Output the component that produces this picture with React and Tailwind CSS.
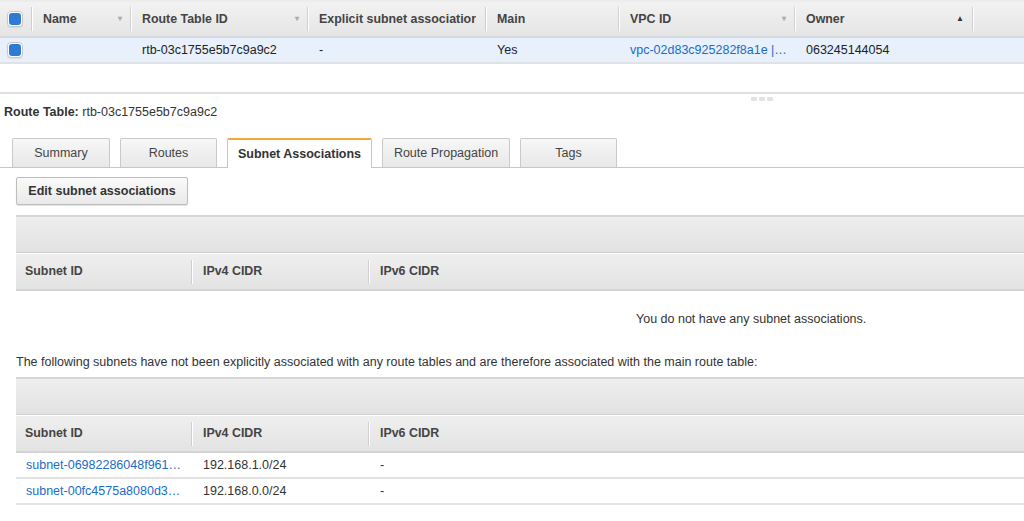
import React from "react";

const font = { fontFamily: '"Liberation Sans", Arial, Helvetica, sans-serif' };

function Checkbox() {
  return (
    <div className="w-[16px] h-[16px] rounded-[4px] border border-[#c9c9c9] bg-white flex items-center justify-center shadow-[0_1px_1px_rgba(0,0,0,0.08)]">
      <div className="w-[12px] h-[12px] rounded-[3px] bg-[#2f7ad3]" />
    </div>
  );
}

function Sep() {
  return <div className="w-[2px] h-[24px] border-l border-[#cfcfcf] bg-white" />;
}

function Arrow({ up }) {
  return (
    <span className={up ? "text-[#333] text-[8px] leading-none" : "text-[#aaa] text-[8px] leading-none"}>
      {up ? "▲" : "▾"}
    </span>
  );
}

function HeadCell({ w, label, arrow, up }) {
  return (
    <div className={`${w} h-full flex items-center`}>
      <div className="flex-1 flex items-center justify-between pl-[10px] pr-[8px] font-bold text-[#444] text-[12.4px] whitespace-nowrap overflow-hidden">
        <span className="overflow-hidden">{label}</span>
        {arrow && <Arrow up={up} />}
      </div>
      <Sep />
    </div>
  );
}

function Tab({ label, active, w }) {
  if (active) {
    return (
      <div className={`${w} h-[30px] bg-white border border-[#c6c6c6] border-t-[2px] border-t-[#f7a538] border-b-0 rounded-t-[2px] flex items-center justify-center font-bold text-[12.5px] text-[#333] -mb-px relative z-10`}>
        {label}
      </div>
    );
  }
  return (
    <div className={`${w} h-[29px] bg-gradient-to-b from-[#f7f7f7] to-[#e8e8e8] border border-[#c9c9c9] border-b-0 rounded-t-[2px] flex items-center justify-center text-[12.5px] text-[#444]`}>
      {label}
    </div>
  );
}

function SubHead() {
  return (
    <div>
      <div className="h-[38px] border-t-2 border-[#d6d6d6] bg-gradient-to-b from-[#eeeeee] to-[#e2e2e2] border-b border-b-[#cfcfcf]" />
      <div className="h-[38px] border-t border-white bg-gradient-to-b from-[#efefef] to-[#e3e3e3] border-b-2 border-b-[#d3d3d3] flex items-center font-bold text-[12.4px] text-[#444]">
        <div className="w-[177px] flex items-center justify-between pl-[9px]">
          <span>Subnet ID</span>
          <Sep />
        </div>
        <div className="w-[177px] flex items-center justify-between pl-[10px]">
          <span>IPv4 CIDR</span>
          <Sep />
        </div>
        <div className="pl-[10px]">IPv6 CIDR</div>
      </div>
    </div>
  );
}

function SubnetRow({ id, cidr }) {
  return (
    <div className="h-[26px] border-b-2 border-[#e3e3e3] flex items-center text-[12.5px] text-[#333]">
      <div className="w-[177px] pl-[10px] text-[#1a6cc7] whitespace-nowrap">{id}</div>
      <div className="w-[177px] pl-[10px]">{cidr}</div>
      <div className="pl-[10px]">-</div>
    </div>
  );
}

export default function App() {
  return (
    <div className="w-[1024px] h-[521px] bg-white overflow-hidden" style={font}>
      {/* top list */}
      <div className="h-[38px] border-t-2 border-[#ececec] bg-gradient-to-b from-[#f2f2f2] to-[#e5e5e5] border-b-2 border-b-[#d8d8e0] flex items-center">
        <div className="w-[33px] h-full flex items-center">
          <div className="pl-[7px] flex-1"><Checkbox /></div>
          <Sep />
        </div>
        <HeadCell w="w-[99px]" label="Name" arrow />
        <HeadCell w="w-[177px]" label="Route Table ID" arrow />
        <HeadCell w="w-[178px]" label="Explicit subnet associatior" />
        <HeadCell w="w-[133px]" label="Main" />
        <HeadCell w="w-[176px]" label="VPC ID" arrow />
        <HeadCell w="w-[178px]" label="Owner" arrow up />
      </div>
      <div className="h-[26px] bg-[#e7f0fb] border-b-2 border-[#dfe3e8] flex items-center text-[12.5px] text-[#222]">
        <div className="w-[33px] pl-[7px]"><Checkbox /></div>
        <div className="w-[99px]" />
        <div className="w-[177px] pl-[10px]">rtb-03c1755e5b7c9a9c2</div>
        <div className="w-[178px] pl-[10px]">-</div>
        <div className="w-[133px] pl-[10px]">Yes</div>
        <div className="w-[176px] pl-[10px] text-[#1a6cc7] whitespace-nowrap">vpc-02d83c925282f8a1e |…</div>
        <div className="w-[178px] pl-[10px]">063245144054</div>
      </div>
      <div className="h-[28px]" />
      <div className="border-t-2 border-[#dedede] h-[8px] flex justify-center">
        <div className="ml-[500px] mt-[3px] flex gap-[2px]">
          <div className="w-[6px] h-[4px] rounded-[1px] bg-[#e2e2e2]" />
          <div className="w-[6px] h-[4px] rounded-[1px] bg-[#e2e2e2]" />
          <div className="w-[6px] h-[4px] rounded-[1px] bg-[#e2e2e2]" />
        </div>
      </div>

      {/* details */}
      <div className="pl-[4px] text-[12.5px] text-[#333] h-[24px] leading-[24px]">
        <span className="font-bold">Route Table:</span> rtb-03c1755e5b7c9a9c2
      </div>
      <div className="mt-[13px] flex items-end gap-[10px] pl-[12px] border-b border-[#c6c6c6] h-[31px]">
        <Tab w="w-[98px]" label="Summary" />
        <Tab w="w-[97px]" label="Routes" />
        <Tab w="w-[145px]" label="Subnet Associations" active />
        <Tab w="w-[128px]" label="Route Propagation" />
        <Tab w="w-[97px]" label="Tags" />
      </div>

      <div className="pl-[16px]">
        <div className="pt-[9px]">
          <div className="w-[172px] h-[28px] bg-gradient-to-b from-[#fafafa] to-[#e9e9e9] border border-[#bdbdbd] rounded-[2px] shadow-[0_1px_1px_rgba(0,0,0,0.12)] flex items-center justify-center font-bold text-[12.5px] text-[#333]">
            Edit subnet associations
          </div>
        </div>
        <div className="mt-[10px]">
          <SubHead />
        </div>
        <div className="h-[56px] flex items-center text-[12.5px] text-[#333] pl-[620px]">
          You do not have any subnet associations.
        </div>
      </div>
      <div className="pl-[16px] pt-[2px] text-[12.5px] text-[#333] h-[30px] leading-[26px]">
        The following subnets have not been explicitly associated with any route tables and are therefore associated with the main route table:
      </div>
      <div className="pl-[16px]">
        <SubHead />
        <SubnetRow id="subnet-06982286048f961…" cidr="192.168.1.0/24" />
        <SubnetRow id="subnet-00fc4575a8080d3…" cidr="192.168.0.0/24" />
      </div>
    </div>
  );
}
